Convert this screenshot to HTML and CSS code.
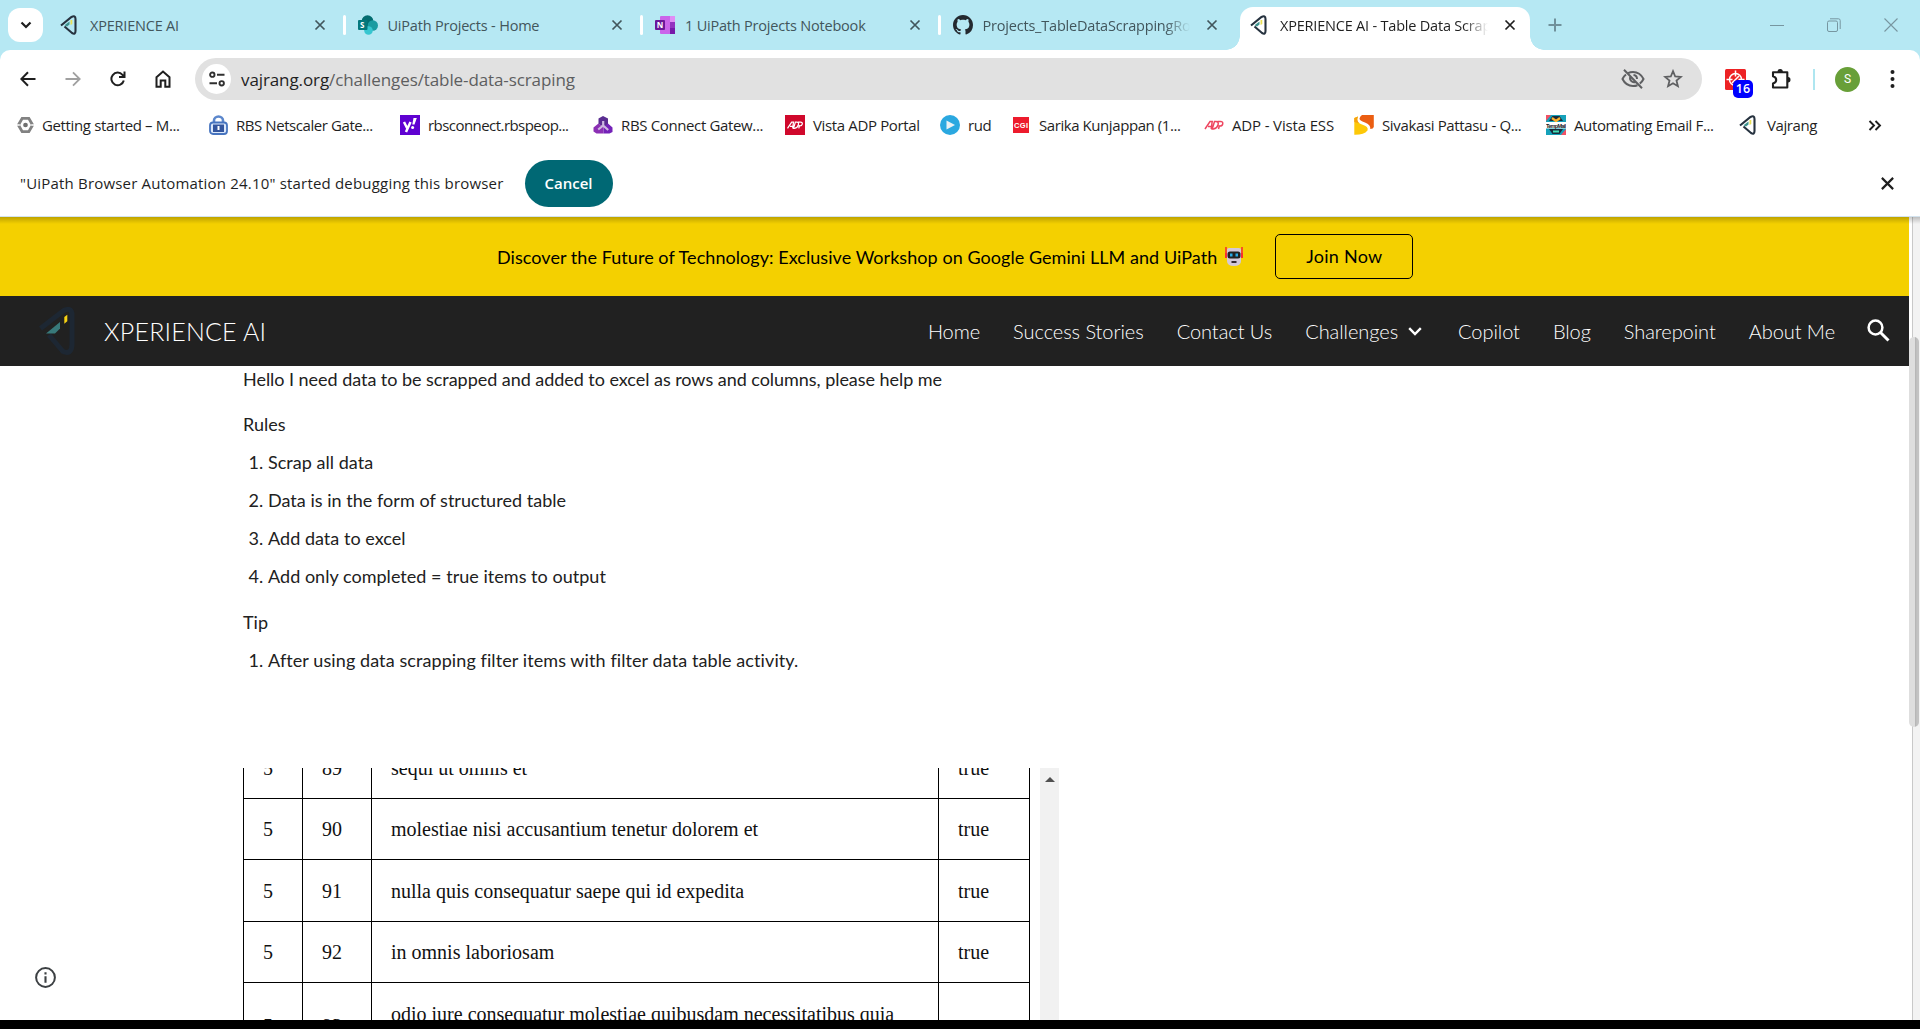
FILE: index.html
```html
<!DOCTYPE html>
<html lang="en">
<head>
<meta charset="utf-8">
<title>XPERIENCE AI - Table Data Scraping</title>
<link rel="stylesheet" href="styles.css">
</head>
<body>
<svg class="defs" width="0" height="0">
  <symbol id="close" viewBox="0 0 12 12"><path d="M1.500 1.500l9 9M10.500 1.500l-9 9" fill="none" stroke="currentColor" stroke-width="1.700"/></symbol>
  <symbol id="vaj" viewBox="0 0 20 20"><path d="M1 10.500L11.500 2Q15.500 0 15.500 4V16Q15.500 20 12 18L4.500 11.500" fill="none" stroke="#26323f" stroke-width="2.100"/><path d="M4.500 10.200L9.500 6.500V9.500L7 11.500z" fill="#3d948f"/><path d="M10.500 5h1.800v4L10.500 10z" fill="#e9df55"/></symbol>
  <symbol id="adp" viewBox="0 0 20 12"><path d="M1 10L6 2.500h2.200L7.200 10M4 7.500h3.500M8.200 10L10.500 2.500h1.500q3 0 2 3.500t-4.500 4zM14.500 10l1-3.500M13.500 2.500h3q2.800 0 2.200 2.500t-4 2" fill="none" stroke="currentColor" stroke-width="1.500"/></symbol>
</svg>

<header class="tabs">
  <button class="tabsearch"><svg width="12" height="8" viewBox="0 0 12 8"><path d="M1.500 1.500L6 6l4.500-4.500" fill="none" stroke="#1f1f1f" stroke-width="2.200"/></svg></button>
  <div class="tab">
    <svg class="fav" viewBox="0 0 20 20"><use href="#vaj"/></svg>
    <span class="label">XPERIENCE AI</span><svg class="x"><use href="#close"/></svg>
  </div>
  <div class="tab">
    <svg class="fav" viewBox="0 0 20 20"><circle cx="9.500" cy="6" r="5.800" fill="#036c70"/><circle cx="14.800" cy="10.500" r="5.200" fill="#1a9ba1"/><circle cx="10.500" cy="15.500" r="4.300" fill="#37c6d0"/><rect y="5" width="9.500" height="10" rx="1" fill="#03787c"/><text x="2" y="13" class="glyph">S</text></svg>
    <span class="label">UiPath Projects - Home</span><svg class="x"><use href="#close"/></svg>
  </div>
  <div class="tab">
    <svg class="fav" viewBox="0 0 20 20"><rect x="5" y="1" width="15" height="18" rx="1" fill="#ca64ea"/><path d="M15 1h5v6h-5z" fill="#e08cf5"/><path d="M15 7h5v6h-5z" fill="#9332bf"/><path d="M15 13h5v6h-5z" fill="#7719aa"/><rect y="5" width="10" height="10" rx="1" fill="#6b1799"/><text x="1.800" y="13" class="glyph">N</text></svg>
    <span class="label">1 UiPath Projects Notebook</span><svg class="x"><use href="#close"/></svg>
  </div>
  <div class="tab">
    <svg class="fav" viewBox="0 0 16 16"><path fill="#24292f" d="M8 0C3.580 0 0 3.580 0 8c0 3.540 2.290 6.530 5.470 7.590.4.070.55-.17.55-.38 0-.19-.01-.82-.01-1.490-2.010.37-2.530-.49-2.690-.94-.09-.23-.48-.94-.82-1.130-.28-.15-.68-.52-.01-.53.63-.01 1.080.58 1.230.82.72 1.210 1.870.87 2.330.66.07-.52.28-.87.51-1.070-1.780-.2-3.640-.89-3.640-3.950 0-.87.31-1.590.82-2.150-.08-.2-.36-1.020.08-2.120 0 0 .67-.21 2.200.82.64-.18 1.320-.27 2-.27s1.360.09 2 .27c1.530-1.040 2.200-.82 2.200-.82.44 1.100.16 1.920.08 2.120.51.56.82 1.270.82 2.150 0 3.070-1.870 3.750-3.650 3.950.29.25.54.73.54 1.480 0 1.070-.01 1.930-.01 2.200 0 .21.15.46.55.38A8.010 8.010 0 0 0 16 8c0-4.420-3.580-8-8-8z"/></svg>
    <span class="label fade">Projects_TableDataScrappingRobot</span><svg class="x"><use href="#close"/></svg>
  </div>
  <div class="tab active">
    <svg class="fav" viewBox="0 0 20 20"><use href="#vaj"/></svg>
    <span class="label fade">XPERIENCE AI - Table Data Scraping</span><svg class="x"><use href="#close"/></svg>
  </div>
  <svg class="plus" width="14" height="14" viewBox="0 0 14 14"><path d="M7 .5v13M.5 7h13" stroke="#70919b" stroke-width="2"/></svg>
  <div class="win">
    <svg width="14" height="14" viewBox="0 0 14 14"><path d="M0 7.500h14" stroke="#7796a0"/></svg>
    <svg width="14" height="14" viewBox="0 0 14 14" fill="none" stroke="#7796a0"><rect x=".5" y="3" width="10" height="10.500" rx="1.500"/><path d="M3 .8h8.500q1.700 0 1.700 1.700V11"/></svg>
    <svg width="14" height="14" viewBox="0 0 14 14"><path d="M.5 .5l13 13M13.500 .5l-13 13" stroke="#7796a0" stroke-width="1.100"/></svg>
  </div>
</header>

<section class="chrome">
<nav class="toolbar">
  <div class="navicons">
    <svg width="16" height="16" viewBox="0 0 16 16"><path d="M15.500 8H1.500M8 1.300L1.300 8 8 14.700" fill="none" stroke="#1f1f1f" stroke-width="2"/></svg>
    <svg width="16" height="16" viewBox="0 0 16 16"><path d="M.5 8h14M8 1.300L14.700 8 8 14.700" fill="none" stroke="#a0a0a0" stroke-width="1.800"/></svg>
    <svg width="16" height="16" viewBox="0 0 16 16"><path d="M13.800 9.500A6.300 6.300 0 1 1 12.500 3.800L14 5.500M14.500 .5V6H9" fill="none" stroke="#1f1f1f" stroke-width="2"/></svg>
    <svg width="16" height="18" viewBox="0 0 16 18"><path d="M1.500 7.200L8 1.600l6.500 5.600V16.700H10.300V10.500H5.700V16.700H1.500z" fill="none" stroke="#1f1f1f" stroke-width="2"/></svg>
  </div>
  <div class="omnibox">
    <span class="site"><svg width="16" height="16" viewBox="0 0 16 16" fill="none" stroke="#303030" stroke-width="1.900"><circle cx="3.300" cy="3.700" r="2.200"/><path d="M8 3.700h7.500M.5 12.300H8"/><circle cx="12.700" cy="12.300" r="2.200"/></svg></span>
    <span class="url">vajrang.org<i>/challenges/table-data-scraping</i></span>
    <svg class="eye" width="24" height="20" viewBox="0 0 24 20" fill="none" stroke="#5f6062" stroke-width="2"><path d="M7 4.200Q9.300 3 12 3q7 0 10.500 7-1.300 2.800-3.700 4.600M16.500 16.200Q14.500 17 12 17q-7 0-10.500-7 1.300-2.600 3.500-4.400"/><path d="M9.500 7.500A4 4 0 0 0 14.500 13M12.500 6A4 4 0 0 1 16 10M3 .8L21 19.200"/></svg>
    <svg width="20" height="20" viewBox="0 0 20 20"><path d="M10 2.200l2.200 5.300 5.700.4-4.400 3.700 1.400 5.600L10 14.200l-4.900 3 1.400-5.600-4.400-3.700 5.700-.4z" fill="none" stroke="#5f6062" stroke-width="1.800"/></svg>
  </div>
  <div class="ext">
    <svg width="21" height="21" viewBox="0 0 21 21"><rect width="21" height="21" rx="1.500" fill="#ed2224"/><g fill="none" stroke="#fff" stroke-width="1.500"><circle cx="10.500" cy="10.500" r="6"/><path d="M10.500 1.500v6M1.500 10.500h6M13.500 10.500h6M7 14l7-7"/></g></svg>
    <b class="count">16</b>
  </div>
  <svg class="puzzle" width="22" height="22" viewBox="0 0 22 22"><path d="M3 4.300H17.300V19.500H3V15.500Q6.200 14.500 6.200 11.900T3 8.300z" fill="none" stroke="#1f1f1f" stroke-width="2.100" stroke-linejoin="round"/><path d="M7.500 4a2.700 2.900 0 0 1 5.400 0zM18 9a2.500 2.700 0 0 1 0 5.400z" fill="#1f1f1f"/></svg>
  <span class="rule"></span>
  <span class="avatar">S</span>
  <svg class="dots" width="5" height="20" viewBox="0 0 5 20" fill="#1f1f1f"><circle cx="2.500" cy="3" r="2"/><circle cx="2.500" cy="10" r="2"/><circle cx="2.500" cy="17" r="2"/></svg>
</nav>

<div class="bookmarks">
  <span><svg width="17" height="18" viewBox="0 0 18 18"><path d="M5.500 2h7L16.500 9l-4 7h-7L1.500 9z" fill="none" stroke="#828282" stroke-width="3"/><circle cx="9" cy="9" r="2.500" fill="#707070"/><path d="M0 9h3M15 9h3" stroke="#fff" stroke-width="1.500"/></svg>Getting started – M...</span>
  <span class="tight"><svg width="19" height="20" viewBox="0 0 19 20"><path d="M5 8V5.500a4.500 4 0 0 1 9 0V8" fill="none" stroke="#5c87cc" stroke-width="2.600"/><rect x="1" y="7.500" width="17" height="11.500" rx="3" fill="#dce9fb" stroke="#4674bf" stroke-width="1.800"/><rect x="4" y="9.500" width="11" height="7.500" fill="#34569e"/><path d="M9.500 11v4" stroke="#fff" stroke-width="2"/></svg>RBS Netscaler Gate...</span>
  <span class="tighter"><svg width="20" height="20" viewBox="0 0 20 20"><rect width="20" height="20" fill="#5f01d1"/><path d="M4 7l3.300 6.500M10.500 7L6 17" stroke="#fff" stroke-width="2.500" fill="none"/><path d="M13.500 3h3.300l-2.300 6.500h-2.200z" fill="#fff"/><circle cx="12.600" cy="12.400" r="1.500" fill="#fff"/></svg>rbsconnect.rbspeop...</span>
  <span><svg width="20" height="20" viewBox="0 0 20 20"><path d="M5.500 9V3.500L10 1l5 2.500v6L11 12z" fill="#5a2d91"/><path d="M.5 12.500L5.500 8.500l5 4V18.500H3.500L.5 16.500z" fill="#8b2fb4"/><path d="M10.500 12L15 8.500l4.500 4v4.500L16.500 18.500h-6z" fill="#7422b8"/><path d="M10.200 6v4.500l-5 4M10.200 10.500l5 4.500" stroke="#cdb9e0" stroke-width="2.200" fill="none"/></svg>RBS Connect Gatew...</span>
  <span><svg width="20" height="20" viewBox="0 0 20 20" color="#fff"><rect width="20" height="20" fill="#d0082c"/><use href="#adp" x="1.500" y="5" width="17" height="10"/></svg>Vista ADP Portal</span>
  <span><svg width="20" height="20" viewBox="0 0 20 20"><circle cx="10" cy="10" r="10" fill="#2ba8e0"/><path d="M6.500 5.500L15 10l-8.500 4.500z" fill="#e9f1f5"/></svg>rud</span>
  <span class="tight wide"><svg width="16" height="16" viewBox="0 0 16 16"><rect width="16" height="16" fill="#ed1b2d"/><text x="1" y="11.200" class="cgi" textLength="14">CGI</text></svg>Sarika Kunjappan (1...</span>
  <span class="loose"><svg width="20" height="12" color="#ee4660"><use href="#adp"/></svg>ADP - Vista ESS</span>
  <span><svg width="20" height="20" viewBox="0 0 20 20"><path d="M8 0h11.800v12q-.5 2-3.500 2 .5-4.500-5.300-6.500T5.500 3.500Q6 1 8 0z" fill="#eb5e12"/><path d="M.3 3L4 1.500Q1 7.500 8 9.500t5.500 6Q10 20 .3 19.800z" fill="#fdc808"/><path d="M.3 3L4 1.500Q2 6 6 8.500L.3 7z" fill="#f5a010"/></svg>Sivakasi Pattasu - Q...</span>
  <span><svg width="20" height="20" viewBox="0 0 20 20"><path d="M0 0h20v20H0z" fill="#15a1ba"/><path d="M0 0h5L0 6zM20 20h-5l5-6z" fill="#f15165"/><path d="M3 6l3.500-5h7L17 6zM3 14h14l-3.500 5h-7z" fill="#182c3c"/><path d="M6 3l4 3 4-3" stroke="#fcb12b" stroke-width="2.200" fill="none"/><path d="M7 15.500h6v2H7z" fill="#43e0b7"/><path d="M0 7h20v6.500H0z" fill="#fff"/><text x="0" y="12.500" class="tm" textLength="20">TempMail</text></svg>Automating Email F...</span>
  <span class="tight"><svg width="20" height="20"><use href="#vaj"/></svg>Vajrang</span>
  <svg class="more" width="14" height="11" viewBox="0 0 14 11"><path d="M1.500 1L6 5.500 1.500 10M7.500 1L12 5.500 7.500 10" fill="none" stroke="#1f1f1f" stroke-width="1.900"/></svg>
</div>

<div class="infobar">
  <span>"UiPath Browser Automation 24.10" started debugging this browser</span>
  <button>Cancel</button>
  <svg class="dismiss"><use href="#close"/></svg>
</div>
</section>

<main class="page">
  <div class="site-col">
    <div class="banner">
      <span class="msg">Discover the Future of Technology: Exclusive Workshop on Google Gemini LLM and UiPath</span>
      <svg class="robot" width="18" height="19" viewBox="0 0 18 19"><path d="M1 0v8M17 0v8" stroke="#f8312f" stroke-width="1.600"/><path d="M2 3q0-2 2-2h10q2 0 2 2v11q0 5-7 5t-7-5z" fill="#d3c8da"/><path d="M0 6h2v5H0zM16 6h2v5h-2z" fill="#f8312f"/><rect x="2.500" y="4.500" width="13" height="7" rx="2.500" fill="#212121"/><path d="M5 6.500h2.500v3H5zM10.500 6.500H13v3h-2.500z" fill="#26a9e8"/><rect x="6.500" y="14" width="5" height="2" fill="#352b32"/></svg>
      <a class="join">Join Now</a>
    </div>
    <div class="sitebar">
      <svg class="logo" width="40" height="48" viewBox="0 0 40 48"><path d="M3.500 21.500L26 4Q34.500-.5 35 7.500V38Q34.500 48 26 44.500L12 28" fill="none" stroke="#1d2733" stroke-width="5"/><path d="M9 26.500L23 15v6.500L18 26.500z" fill="#38797a"/><path d="M27.300 10l3-2.300v6.500l-3 2.500z" fill="#f7d213"/></svg>
      <span class="brand">XPERIENCE AI</span>
      <nav class="links">
        <a>Home</a><a>Success Stories</a><a>Contact Us</a>
        <a class="menu">Challenges<svg width="14" height="9" viewBox="0 0 14 9"><path d="M1.200 1.200L7 7l5.800-5.800" fill="none" stroke="#fff" stroke-width="2.400"/></svg></a>
        <a>Copilot</a><a>Blog</a><a>Sharepoint</a><a>About Me</a>
      </nav>
      <svg class="search" width="23" height="23" viewBox="0 0 23 23"><circle cx="8.500" cy="8.500" r="6.900" fill="none" stroke="#fff" stroke-width="2.500"/><path d="M13.500 13.500l8 8" stroke="#fff" stroke-width="3"/></svg>
    </div>
    <article class="content">
      <p class="hello">Hello I need data to be scrapped and added to excel as rows and columns, please help me</p>
      <p class="head">Rules</p>
      <ol>
        <li>Scrap all data</li>
        <li>Data is in the form of structured table</li>
        <li>Add data to excel</li>
        <li>Add only completed = true items to output</li>
      </ol>
      <p class="head tip">Tip</p>
      <ol class="last"><li>After using data scrapping filter items with filter data table activity.</li></ol>
      <div class="frame">
        <table>
          <colgroup><col class="c1"><col class="c2"><col class="c3"><col class="c4"></colgroup>
          <tr><td>5</td><td>89</td><td>sequi ut omnis et</td><td>true</td></tr>
          <tr><td>5</td><td>90</td><td>molestiae nisi accusantium tenetur dolorem et</td><td>true</td></tr>
          <tr class="taller"><td>5</td><td>91</td><td>nulla quis consequatur saepe qui id expedita</td><td>true</td></tr>
          <tr><td>5</td><td>92</td><td>in omnis laboriosam</td><td>true</td></tr>
          <tr class="double"><td>5</td><td>93</td><td>odio iure consequatur molestiae quibusdam necessitatibus quia<br>sint</td><td>true</td></tr>
        </table>
        <div class="framebar"></div>
      </div>
      <svg class="info" width="21" height="21" viewBox="0 0 21 21"><circle cx="10.500" cy="10.500" r="9.400" fill="none" stroke="#3c4043" stroke-width="2"/><path d="M10.500 9.300v6.500M10.500 5.200v2.300" stroke="#3c4043" stroke-width="2.100"/></svg>
    </article>
  </div>
  <div class="scroll"><div class="thumb"></div></div>
</main>
<footer class="bottom"></footer>
</body>
</html>
```

FILE: styles.css
```css
* { box-sizing: border-box; }
body {
  margin: 0;
  width: 1920px;
  height: 1029px;
  overflow: hidden;
  display: flex;
  flex-direction: column;
  background: #b6e8f3;
  font: 15px "Open Sans", "Noto Sans", sans-serif;
  color: #1f1f1f;
}
svg { flex: none; display: block; }
.defs { position: absolute; }
button { border: 0; padding: 0; font: inherit; }

/* Tab strip */
.tabs { height: 50px; flex: none; display: flex; align-items: center; padding-left: 8px; }
.tabsearch { width: 35px; height: 34px; border-radius: 12px; background: #fff; display: flex; align-items: center; justify-content: center; }
.tab { width: 297.500px; height: 50px; display: flex; align-items: center; padding: 0 15px 0 17px; color: #42565c; position: relative; font-size: 14.500px; letter-spacing: -.2px; }
.tab:nth-of-type(n+2)::before { content: ""; position: absolute; left: 2px; top: 15px; width: 3px; height: 20px; border-radius: 2px; background: #fff; }
.fav { width: 20px; height: 20px; margin-right: 10px; }
.glyph { font: bold 8px "Open Sans", sans-serif; fill: #fff; letter-spacing: 0; }
.label { flex: 1; overflow: hidden; white-space: nowrap; margin-right: 16px; }
.fade { -webkit-mask-image: linear-gradient(90deg, #000 88%, transparent); mask-image: linear-gradient(90deg, #000 88%, transparent); }
.x { width: 12px; height: 12px; }
.tab.active { width: 290px; height: 43px; align-self: flex-end; background: #fff; border-radius: 13px 13px 0 0; color: #1f1f1f; margin-left: 7px; padding: 0 14px 7px 10px; }
.tab.active::after { content: ""; position: absolute; bottom: 0; right: -14px; width: 14px; height: 14px; background: radial-gradient(circle at 100% 0, transparent 13.500px, #fff 14px); }
.tab.active:nth-of-type(n+2)::before { left: -14px; top: auto; bottom: 0; width: 14px; height: 14px; border-radius: 0; background: radial-gradient(circle at 0 0, transparent 13.500px, #fff 14px); }
.plus { margin-left: 18px; }
.win { margin-left: auto; padding-right: 22px; display: flex; gap: 43px; }

/* Toolbar */
.chrome { height: 167px; flex: none; background: #fff; border-radius: 10px 10px 0 0; border-bottom: 1px solid #d3e3ef; }
.toolbar { height: 58px; display: flex; align-items: center; padding: 0 25px 0 20px; }
.navicons { display: flex; align-items: center; gap: 29px; width: 175px; }
.omnibox { width: 1507px; height: 42px; border-radius: 21px; background: #e1e1e1; display: flex; align-items: center; padding: 0 19px 0 7px; }
.site { width: 29px; height: 30px; border-radius: 50%; background: #fff; display: flex; align-items: center; justify-content: center; }
.url { margin-left: 10px; flex: 1; font-size: 17px; letter-spacing: -.1px; }
.url i { font-style: normal; color: #5d5e60; }
.eye { margin-right: 18px; }
.ext { position: relative; margin-left: 23px; }
.count { position: absolute; left: 8px; top: 11px; width: 20px; height: 18px; border-radius: 5px; background: #00f; color: #fff; font: 600 12.500px/18px "Open Sans", sans-serif; text-align: center; }
.puzzle { margin-left: 24px; }
.rule { width: 2px; height: 21px; background: #aee6f0; margin-left: 21px; }
.avatar { margin-left: 20px; width: 25px; height: 25px; border-radius: 50%; background: #689f38; color: #fff; font: 12px/25px Roboto, sans-serif; text-align: center; }
.dots { margin-left: auto; }

/* Bookmarks */
.bookmarks { height: 34px; display: grid; grid-template-columns: 192px 191px 193px 192px 155px 73px 191px 150px 192px 193px 129px auto; align-items: center; padding-left: 17px; letter-spacing: -.36px; }
.bookmarks span { display: flex; align-items: center; gap: 8px; white-space: nowrap; }
.bookmarks .tight { letter-spacing: -.43px; }
.bookmarks .wide { gap: 10px; }
.bookmarks .tighter { letter-spacing: -.55px; }
.bookmarks .loose { letter-spacing: -.15px; }
.cgi { font: bold 7.500px "Liberation Sans", sans-serif; fill: #fff; letter-spacing: 0; }
.tm { font: bold 5.500px "Liberation Sans", sans-serif; fill: #222; letter-spacing: 0; }

/* Debugger notice */
.infobar { height: 70px; padding: 14px 25px 0 20px; display: flex; align-items: center; letter-spacing: .19px; margin-top: -1px; }
.infobar button { width: 88px; height: 47px; border-radius: 24px; background: #006874; color: #fff; font-weight: 600; margin-left: 21px; letter-spacing: 0; }
.dismiss { width: 15px; height: 15px; margin-left: auto; }

/* Web page */
.page { height: 803px; flex: none; display: flex; background: #fff; position: relative; }
.page::before { content: ""; position: absolute; inset: 0 0 auto; height: 7px; background: linear-gradient(rgba(0,0,0,.22), transparent); z-index: 2; }
.site-col { width: 1909px; font-family: Lato, sans-serif; }
.banner { height: 79px; background: #f4d000; color: #000; display: flex; align-items: center; padding-left: 497px; font-size: 18px; letter-spacing: .055px; }
.robot { margin-left: 8px; }
.join { margin-left: 32px; width: 138px; height: 45px; padding-bottom: 2px; border: 1px solid #000; border-radius: 5px; display: flex; align-items: center; justify-content: center; letter-spacing: .25px; }
.sitebar { height: 70px; background: #212121; color: #fff; display: flex; align-items: center; padding: 0 19px 0 37px; font-weight: 300; }
.brand { font-size: 25px; margin-left: 27px; letter-spacing: .2px; }
.links { margin-left: auto; display: flex; gap: 33px; font-size: 20px; letter-spacing: -.06px; }
.links a { display: flex; align-items: center; gap: 9px; }
.links .menu { margin-right: 3px; gap: 10px; }
.search { margin-left: 32px; margin-bottom: 2px; }
.content { height: 654px; padding-left: 243px; font-size: 18px; line-height: 26px; color: #212121; overflow: hidden; position: relative; }
.content p, .content ol { margin: 0; }
.hello { letter-spacing: -.04px; }
.content .head { margin-top: 19px; }
.content .tip { margin-top: 20px; }
.content ol { padding-left: 25px; letter-spacing: .03px; }
.content .last { letter-spacing: .09px; }
.content li { margin-top: 12px; }
.frame { height: 252px; width: 816px; margin-top: 95px; display: flex; justify-content: space-between; overflow: hidden; }
table { width: 787px; margin-top: -31px; border-collapse: collapse; table-layout: fixed; font: 20px/24px "Liberation Serif", serif; letter-spacing: 0; color: #111; flex: none; }
td { border: 1px solid #000; padding: 0 0 0 19px; height: 61px; white-space: nowrap; }
.taller td { height: 62px; }
.double td { height: 87px; }
.c1 { width: 59px; } .c2 { width: 69px; } .c3 { width: 567px; } .c4 { width: 91px; }
.framebar { width: 19px; background: #f1f1f1; padding: 9px 0 0 5px; }
.framebar::before { content: ""; display: block; border: 5px solid transparent; border-top: 0; border-bottom-color: #505050; width: 0; }
.info { position: absolute; left: 35px; bottom: 32px; }
.scroll { width: 11px; background: linear-gradient(90deg, #fff 3px, #c9c9c9 3px, #c9c9c9 4px, #f3f3f3 4px); padding-top: 120px; }
.thumb { width: 10px; height: 390px; border-radius: 5px; background: linear-gradient(90deg, #dedede 6px, #b3b3b3 6px, #c3c3c3 8px); }
.bottom { height: 9px; flex: none; background: #000; }
```
